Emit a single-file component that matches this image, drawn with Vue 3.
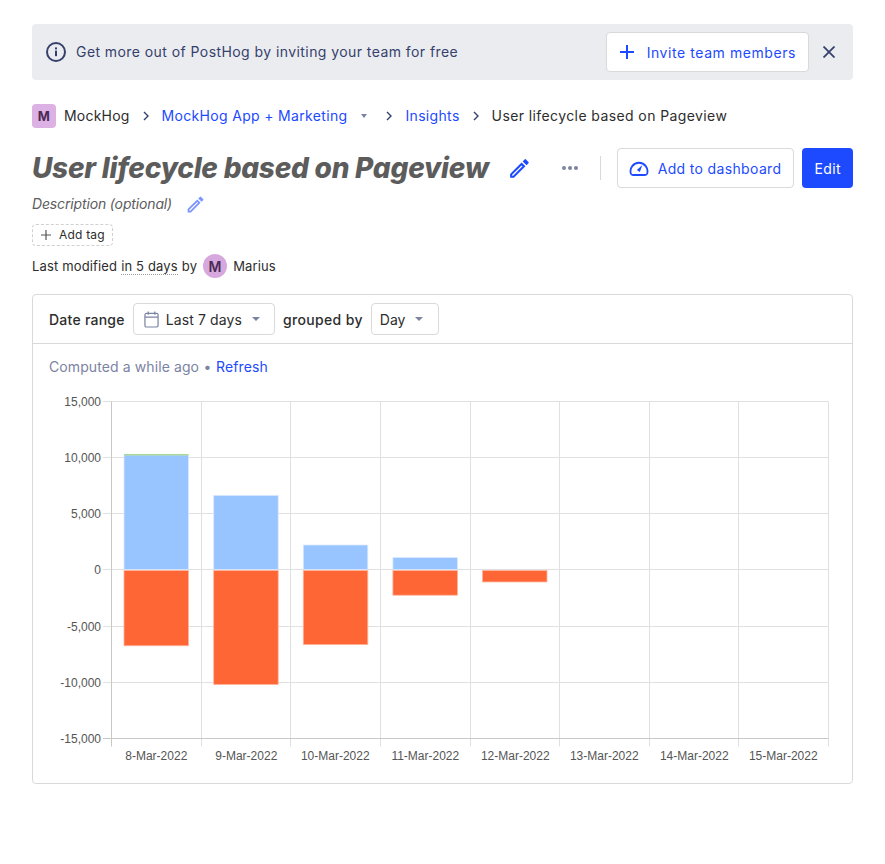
<template>
  <div class="page">
    <div class="banner">
      <svg class="info-icon" viewBox="0 0 20 20" width="20" height="20" fill="none">
        <circle cx="10" cy="10" r="9" stroke="#35416b" stroke-width="2" />
        <rect x="9" y="8.6" width="2" height="5.6" fill="#35416b" />
        <rect x="9" y="5.4" width="2" height="2" fill="#35416b" />
      </svg>
      <span class="banner-text">Get more out of PostHog by inviting your team for free</span>
      <button class="btn invite">
        <svg viewBox="0 0 14 14" width="14" height="14" fill="none">
          <path d="M7 0v14M0 7h14" stroke="#1d4aff" stroke-width="2" />
        </svg>
        <span>Invite team members</span>
      </button>
      <svg class="close" viewBox="0 0 12 12" width="12" height="12" fill="none">
        <path d="M.5.5l11 11M11.5.5l-11 11" stroke="#35416b" stroke-width="1.8" />
      </svg>
    </div>

    <div class="crumbs">
      <span class="org-logo">M</span>
      <span class="crumb org">MockHog</span>
      <svg class="sep" viewBox="0 0 6 10" width="6" height="10" fill="none"><path d="M1 1l4 4-4 4" stroke="#35416b" stroke-width="1.4" /></svg>
      <a class="crumb link">MockHog App + Marketing</a>
      <span class="caret small"></span>
      <svg class="sep" viewBox="0 0 6 10" width="6" height="10" fill="none"><path d="M1 1l4 4-4 4" stroke="#35416b" stroke-width="1.4" /></svg>
      <a class="crumb link">Insights</a>
      <svg class="sep" viewBox="0 0 6 10" width="6" height="10" fill="none"><path d="M1 1l4 4-4 4" stroke="#35416b" stroke-width="1.4" /></svg>
      <span class="crumb current">User lifecycle based on Pageview</span>
    </div>

    <div class="title-row">
      <h1>User lifecycle based on Pageview</h1>
      <svg class="title-pencil" viewBox="0 0 24 24" width="25" height="25"><path fill="#1d4aff" d="M3 17.25V21h3.75L17.81 9.94l-3.75-3.75L3 17.25zM5.92 19H5v-.92l9.06-9.06.92.92L5.92 19zM20.71 7.04a1 1 0 0 0 0-1.41l-2.34-2.34a1 1 0 0 0-1.41 0l-1.83 1.83 3.75 3.75 1.83-1.83z" /></svg>
      <span class="dots"><i></i><i></i><i></i></span>
      <span class="vline"></span>
      <button class="btn dash">
        <svg viewBox="0 0 20 16" width="20" height="16" fill="none">
          <path d="M4 15h12c1.200 0 1.900-.6 2.200-1.500a8.500 8.500 0 1 0-16.400 0C2.100 14.400 2.800 15 4 15z" stroke="#1d4aff" stroke-width="1.800" />
          <path d="M7.800 10l5.600-5-2.600 7z" fill="#1d4aff" />
        </svg>
        <span>Add to dashboard</span>
      </button>
      <button class="edit">Edit</button>
    </div>

    <div class="desc">
      <span class="desc-text">Description (optional)</span>
      <svg viewBox="0 0 24 24" width="21" height="21"><path fill="#7b95ff" d="M3 17.25V21h3.75L17.81 9.94l-3.75-3.75L3 17.25zM5.92 19H5v-.92l9.06-9.06.92.92L5.92 19zM20.71 7.04a1 1 0 0 0 0-1.41l-2.34-2.34a1 1 0 0 0-1.41 0l-1.83 1.83 3.75 3.75 1.83-1.83z" /></svg>
    </div>

    <div class="tag">
      <svg viewBox="0 0 10 10" width="10" height="10" fill="none"><path d="M5 0v10M0 5h10" stroke="#555" stroke-width="1.2" /></svg>
      <span class="tag-text">Add tag</span>
    </div>

    <div class="modified">
      <span>Last modified</span>
      <span class="dotted">in 5 days</span>
      <span>by</span>
      <span class="avatar">M</span>
      <span class="author">Marius</span>
    </div>

    <div class="card">
      <div class="filters">
        <span class="filter-label range">Date range</span>
        <div class="select date">
          <svg viewBox="0 0 16 18" width="15" height="17" fill="none">
            <rect x="1" y="2.5" width="14" height="14.5" rx="1.5" stroke="#7b83a3" stroke-width="1.3" />
            <path d="M1 6.500h14M4.500 .5v3.500M11.500 .5v3.500" stroke="#7b83a3" stroke-width="1.3" />
          </svg>
          <span class="select-text">Last 7 days</span>
          <span class="caret"></span>
        </div>
        <span class="filter-label">grouped by</span>
        <div class="select day">
          <span>Day</span>
          <span class="caret"></span>
        </div>
      </div>
      <div class="chart-body">
        <div class="computed">
          <span>Computed a while ago</span>
          <span>•</span>
          <a class="refresh">Refresh</a>
        </div>
        <svg class="chart" width="819" height="400" viewBox="0 0 819 400">
          <g stroke="#e0e0e0" stroke-width="1">
            <line v-for="t in yTicks" :key="t.label" x1="70" :x2="plotRight" :y1="t.y" :y2="t.y" />
            <line v-for="x in gridXs.slice(1)" :key="x" :x1="x" :x2="x" :y1="plotTop" :y2="plotBottom + 8" />
          </g>
          <line :x1="gridXs[0]" :x2="gridXs[0]" :y1="plotTop" :y2="plotBottom + 8" stroke="#c8c8c8" />
          <line x1="70" :x2="plotRight" :y1="plotBottom" :y2="plotBottom" stroke="#c8c8c8" />
          <g v-for="b in bars" :key="b.label">
            <rect v-if="b.up" :x="b.x" :y="zeroY - b.up * pxPerUnit" width="64.5" :height="b.up * pxPerUnit" fill="#98c4ff" stroke="#dbe9ff" stroke-width="0.8" />
            <rect :x="b.x" :y="zeroY + 1" width="64.5" :height="b.down * pxPerUnit" fill="#ff6636" stroke="#ffb49c" stroke-width="0.8" />
          </g>
          <rect x="91" y="76" width="64.5" height="1.5" fill="#a9d99a" />
          <text v-for="t in yTicks" :key="t.label" class="tick" x="68" :y="t.y + 4" text-anchor="end">{{ t.label }}</text>
          <text v-for="(d, i) in dates" :key="d" class="tick" :x="gridXs[i] + 44.8" y="382" text-anchor="middle">{{ d }}</text>
        </svg>
      </div>
    </div>
  </div>
</template>

<script setup>
// coordinates are relative to the chart svg
const plotTop = 23.5
const plotBottom = 360.5
const plotRight = 795.5
const zeroY = 191.5
const pxPerUnit = 56.17 / 5000

const yValues = [15000, 10000, 5000, 0, -5000, -10000, -15000]
const yTicks = yValues.map((v) => ({
  label: v.toLocaleString("en-US"),
  y: Math.round(zeroY - 0.1 - v * pxPerUnit) + 0.5,
}))

const gridXs = [78.5, 168.5, 257.5, 347.5, 437.5, 526.5, 616.5, 705.5, 795.5]

const dates = [
  "8-Mar-2022",
  "9-Mar-2022",
  "10-Mar-2022",
  "11-Mar-2022",
  "12-Mar-2022",
  "13-Mar-2022",
  "14-Mar-2022",
  "15-Mar-2022",
]

const bars = [
  { label: "8", x: 91, up: 10200, down: 6700 },
  { label: "9", x: 180.7, up: 6600, down: 10150 },
  { label: "10", x: 270.3, up: 2180, down: 6600 },
  { label: "11", x: 359.9, up: 1060, down: 2200 },
  { label: "12", x: 449.5, up: 0, down: 1020 },
]
</script>

<style>
body {
  margin: 0;
  background: #fff;
}
</style>

<style scoped>
.page {
  padding: 24px 32px 0;
  font-family: Inter, "Liberation Sans", sans-serif;
  font-size: 14px;
  color: #2d2d2d;
}
.banner {
  display: flex;
  align-items: center;
  height: 56px;
  background: #ebecf0;
  border-radius: 4px;
  padding: 0 18px 0 14px;
  color: #35416b;
}
.info-icon {
  margin-right: 10px;
}
.banner-text {
  flex: 1;
  letter-spacing: 0.43px;
  padding-bottom: 2px;
}
.btn {
  display: flex;
  align-items: center;
  flex-shrink: 0;
  background: #fff;
  border: 1px solid #d9d9d9;
  border-radius: 4px;
  color: #1d4aff;
  font: inherit;
  white-space: nowrap;
}
.invite {
  height: 40px;
  padding: 0 12px 0 13px;
  gap: 13px;
  letter-spacing: 0.57px;
}
.close {
  margin-left: 14px;
}
.crumbs {
  display: flex;
  align-items: center;
  height: 24px;
  margin-top: 24px;
  letter-spacing: 0.33px;
}
.crumb {
  padding-bottom: 2px;
}
.crumb.org {
  letter-spacing: 0.2px;
}
.crumb.current {
  letter-spacing: 0.4px;
}
.org-logo {
  width: 24px;
  height: 24px;
  border-radius: 4px;
  background: #dcb1e3;
  color: #4b2a55;
  font-weight: 700;
  font-size: 13px;
  display: flex;
  align-items: center;
  justify-content: center;
  margin-right: 8px;
}
.crumb.link,
.refresh {
  color: #1d4aff;
}
.sep {
  margin: 0 13px;
}
.caret {
  width: 0;
  height: 0;
  border-left: 4px solid transparent;
  border-right: 4px solid transparent;
  border-top: 4px solid #7b83a3;
}
.caret.small {
  margin-left: 14px;
  margin-right: 6px;
  border-left-width: 3.5px;
  border-right-width: 3.5px;
}
.title-row {
  display: flex;
  align-items: center;
  height: 40px;
  margin-top: 20px;
}
h1 {
  margin: 0;
  font-size: 28px;
  font-weight: 800;
  font-style: italic;
  color: #5c5c5c;
  letter-spacing: -0.24px;
  white-space: nowrap;
}
.title-pencil {
  margin-left: 18px;
}
.dots {
  display: flex;
  gap: 2px;
  margin-left: 30px;
}
.dots i {
  width: 4px;
  height: 4px;
  border-radius: 50%;
  background: #7b83a3;
}
.vline {
  width: 1px;
  height: 24px;
  background: #d9d9d9;
  margin: 0 16px 0 22px;
}
.dash {
  height: 40px;
  padding: 0 12px 0 11px;
  gap: 9px;
  letter-spacing: 0.35px;
}
.edit {
  height: 40px;
  margin-left: 8px;
  padding: 0 12px;
  background: #1d4aff;
  color: #fff;
  border: none;
  border-radius: 4px;
  font: inherit;
  letter-spacing: 0.4px;
}
.desc {
  display: flex;
  align-items: center;
  gap: 13px;
  font-style: italic;
  color: #5c5c5c;
  height: 24px;
  margin-top: 4px;
}
.desc-text {
  letter-spacing: -0.15px;
  padding-bottom: 2px;
}
.tag {
  display: flex;
  width: fit-content;
  box-sizing: border-box;
  align-items: center;
  gap: 8px;
  height: 22px;
  margin-top: 8px;
  padding: 0 7px 0 8px;
  border: 1px dashed #d0d0d0;
  border-radius: 4px;
  font-size: 12px;
  letter-spacing: 0.2px;
}
.tag-text {
  padding-bottom: 2px;
}
.modified {
  display: flex;
  align-items: center;
  gap: 4px;
  font-size: 13px;
  height: 24px;
  margin-top: 8px;
  letter-spacing: 0.15px;
}
.dotted {
  border-bottom: 1px dotted #9a9a9a;
}
.avatar {
  width: 24px;
  height: 24px;
  border-radius: 50%;
  background: #d7a8de;
  color: #4b2a55;
  font-weight: 600;
  font-size: 14px;
  display: flex;
  align-items: center;
  justify-content: center;
  margin-left: 2px;
}
.author {
  margin-left: 2px;
}
.card {
  margin-top: 16px;
  border: 1px solid #d9d9d9;
  border-radius: 4px;
  height: 490px;
  box-sizing: border-box;
}
.filters {
  display: flex;
  align-items: center;
  gap: 8px;
  height: 48px;
  padding: 0 16px;
  border-bottom: 1px solid #d9d9d9;
}
.filter-label {
  font-weight: 500;
  letter-spacing: 0.35px;
}
.filter-label.range {
  letter-spacing: 0.25px;
}
.select {
  display: flex;
  align-items: center;
  height: 32px;
  box-sizing: border-box;
  border: 1px solid #d9d9d9;
  border-radius: 4px;
}
.select.date {
  gap: 6px;
  padding: 0 14px 0 10px;
}
.select-text {
  margin-left: 1px;
  letter-spacing: 0.1px;
}
.select.date .caret {
  margin-left: 4px;
}
.select.day {
  padding: 0 15px 0 8px;
  gap: 10px;
}
.computed {
  display: flex;
  gap: 4.5px;
  padding: 14px 16px 0;
  height: 20px;
  color: #7b83a3;
  letter-spacing: 0.1px;
}
.chart {
  display: block;
}
.tick {
  font-family: "Liberation Sans", Arial, sans-serif;
  font-size: 12px;
  fill: #555;
}
</style>
